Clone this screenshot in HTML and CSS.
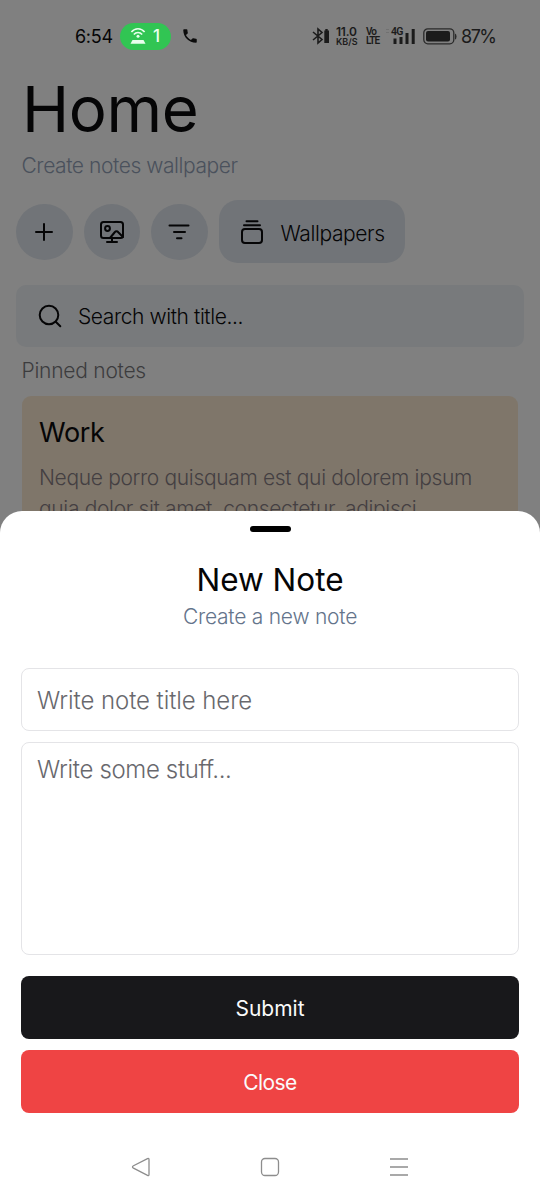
FILE: index.html
```html
<!DOCTYPE html>
<html lang="en">
<head>
<meta charset="utf-8">
<meta name="viewport" content="width=device-width">
<title>Home</title>
<link rel="stylesheet" href="styles.css">
</head>
<body>
<div class="screen">
  <header class="status">
    <span class="clock">6:54</span>
    <span class="hotspot">
      <svg width="16" height="18" viewBox="0 0 16 18" fill="none" stroke="#e9ffed" stroke-width="1.600"><path d="M1.400 5C5 .6 11 .6 14.600 5M3.800 7.600C6.200 4.800 9.800 4.800 12.200 7.600"/><circle cx="8" cy="9.200" r="1.500" fill="#e9ffed" stroke="none"/><path d="M2.500 13h11l2 3.700H.5z" fill="#e9ffed" stroke="none"/></svg>
      <span class="hotspot-count">1</span>
    </span>
    <svg class="phone" width="18" height="18" viewBox="0 0 24 24" fill="#0b0b0b"><path d="M6.600 10.800c1.400 2.800 3.800 5.100 6.600 6.600l2.200-2.200c.3-.3.700-.4 1-.2 1.100.4 2.300.6 3.600.6.600 0 1 .4 1 1V20c0 .600-.4 1-1 1C10.600 21 3 13.400 3 4c0-.600.4-1 1-1h3.500c.6 0 1 .4 1 1 0 1.200.2 2.400.6 3.600.1.300 0 .700-.2 1z"/></svg>
    <svg class="bluetooth" width="18" height="18" viewBox="0 0 18 18" fill="none" stroke="#1b1b1b" stroke-width="1.600"><path d="M1 5l9 7.500-4 3.500V2l4 3.500L1 13"/><path d="M12.300 3.500h1V2h2.400v1.500h1.300V16h-4.700z" fill="#1b1b1b" stroke="none"/></svg>
    <span class="stack speed"><b class="rate">11.0</b><b class="unit">KB/S</b></span>
    <span class="stack volte"><b>Vo</b><b>LTE</b></span>
    <span class="signal">
      <svg width="30" height="18" viewBox="0 0 30 18" fill="#1b1b1b"><path d="M7.500 11.500h3V17h-3zM13.500 10h3v7h-3zM19.500 6h3v11h-3zM25.700 2h3v15h-3z"/><path d="M0 2h3v1H0zM0 5h3v1H0z" opacity=".15"/></svg>
      <span class="network">4G</span>
    </span>
    <svg class="battery" width="34" height="17" viewBox="0 0 34 17"><rect x=".8" y=".8" width="30" height="15" rx="4" fill="none" stroke="#2a2a2a" stroke-width="1.300"/><rect x="3" y="3" width="24" height="10.600" rx="2" fill="#1b1b1b"/><path d="M32 5.500q1.500.5 1.500 3t-1.500 3z" fill="#2a2a2a"/></svg>
    <span class="percent">87%</span>
  </header>

  <main class="home">
    <h1 class="title">Home</h1>
    <p class="subtitle">Create notes wallpaper</p>
    <div class="actions">
      <button class="round" aria-label="Add"><svg width="26" height="26" viewBox="0 0 26 26"><path d="M13 5v16M5 13h16"/></svg></button>
      <button class="round" aria-label="Wallpaper"><svg width="26" height="26" viewBox="0 0 26 26"><rect x="2" y="3" width="22" height="16" rx="2.500"/><circle cx="8.500" cy="9.500" r="2.400"/><path d="M11 19l4.500-5.500q2-2.300 4 0l4.500 4.500M13 19v4M8 23h10"/></svg></button>
      <button class="round" aria-label="Filter"><svg width="26" height="26" viewBox="0 0 26 26"><path d="M3.500 6.500h19M8 13h11M11 19.200h4.500"/></svg></button>
      <button class="wide"><svg width="26" height="26" viewBox="0 0 26 26"><rect x="3" y="10" width="20" height="14" rx="3"/><path d="M5 6.200h16M7.500 2.200h11"/></svg><span>Wallpapers</span></button>
    </div>
    <div class="search">
      <svg width="26" height="26" viewBox="0 0 26 26"><circle cx="12" cy="12" r="9.300"/><path d="M18.700 18.700l4.600 4.600"/></svg>
      <span>Search with title...</span>
    </div>
    <h2 class="section">Pinned notes</h2>
    <article class="note">
      <h3 class="note-title">Work</h3>
      <p class="note-body">Neque porro quisquam est qui dolorem ipsum<br>quia dolor sit amet, consectetur, adipisci</p>
    </article>
  </main>

  <section class="sheet">
    <div class="handle"></div>
    <h2 class="sheet-title">New Note</h2>
    <p class="sheet-subtitle">Create a new note</p>
    <div class="field">Write note title here</div>
    <div class="field area">Write some stuff...</div>
    <button class="submit">Submit</button>
    <button class="close">Close</button>
    <nav class="system">
      <svg width="20" height="20" viewBox="0 0 20 20"><path d="M16.500 1.600L2.500 8.700q-2 1.200 0 2.400l14 7.300q1.500.6 1.500-1V2.600q0-1.500-1.500-1z"/></svg>
      <svg width="20" height="20" viewBox="0 0 20 20"><rect x="1.500" y="1.500" width="17" height="17" rx="3.500"/></svg>
      <svg width="20" height="20" viewBox="0 0 20 20"><path d="M1 2h18M1 10h18M1 18h18"/></svg>
    </nav>
  </section>
</div>
</body>
</html>
```
FILE: styles.css
```css
* { box-sizing: border-box; }
body { margin: 0; }
h1, h2, h3, p { margin: 0; font-weight: 300; }
button { border: 0; padding: 0; font: inherit; }
svg { display: block; flex: none; }

.screen {
  position: relative;
  width: 540px;
  height: 1200px;
  overflow: hidden;
  background: #808080;
  font-family: Inter, "Liberation Sans", sans-serif;
  font-weight: 300;
  font-size: 21px;
  color: #050506;
  white-space: nowrap;
}

.status { display: flex; align-items: center; height: 72px; padding-left: 75px; }
.clock { width: 45px; padding-top: 1px; font-size: 18px; font-weight: 400; letter-spacing: -0.3px; }
.hotspot { display: flex; align-items: center; width: 51px; height: 27px; padding-left: 10px; gap: 7px; border-radius: 14px; background: #31c553; }
.hotspot-count { font-size: 17px; font-weight: 500; color: #e9ffed; }
.phone { margin-left: 10px; }
.bluetooth { margin-left: 113px; }
.stack { display: flex; flex-direction: column; color: #1b1b1b; line-height: 10px; }
.stack b { font-weight: 600; }
.speed { width: 22px; margin-left: 6px; }
.rate { font-size: 12px; letter-spacing: -0.2px; }
.unit { font-size: 9px; line-height: 9px; letter-spacing: 0; }
.volte { width: 13px; margin-left: 8px; font-family: Roboto, sans-serif; line-height: 9px; font-size: 10px; letter-spacing: -1px; }
.signal { position: relative; margin-left: 7px; }
.network { position: absolute; left: 5px; top: 0; font-family: Roboto, sans-serif; font-size: 10.500px; line-height: 10px; font-weight: 600; letter-spacing: -0.800px; color: #1b1b1b; }
.battery { margin-left: 7px; }
.percent { margin-left: 4px; padding-top: 1px; font-size: 18px; font-weight: 400; letter-spacing: -1.500px; color: #1b1b1b; }

.home { padding: 0 16px; }
.title { height: 78px; padding-left: 6px; line-height: 74px; font-size: 63.500px; font-weight: 400; letter-spacing: -0.400px; }
.subtitle { height: 30px; padding-left: 5.500px; line-height: 31px; letter-spacing: -0.430px; color: #4a515c; }
.actions { display: flex; align-items: center; gap: 11px; height: 63px; margin-top: 20.400px; }
.actions svg, .search svg { fill: none; stroke: #050506; stroke-width: 2; stroke-linecap: round; stroke-linejoin: round; }
.round { display: grid; place-items: center; width: 56.500px; height: 56.500px; border-radius: 50%; background: #717478; }
.wide { display: flex; align-items: center; gap: 16px; width: 186px; height: 63px; padding-left: 20px; border-radius: 19px; background: #717478; color: #050506; letter-spacing: -0.400px; }
.wide span { padding-top: 3px; }
.search { display: flex; align-items: center; gap: 15px; height: 62px; margin-top: 21.600px; padding-left: 21px; border-radius: 10px; background: #787a7c; letter-spacing: -0.410px; }
.search span { padding-top: 2px; }
.section { height: 48px; padding-left: 5.500px; line-height: 47px; font-size: 21px; letter-spacing: -0.250px; color: #3c3c3e; }
.note { height: 170px; margin: 1px 6px 0; padding: 17px 17px 0; border-radius: 9px; background: #7f766a; }
.note-title { line-height: 40px; font-size: 27px; font-weight: 400; letter-spacing: -0.350px; }
.note-body { padding-top: 9px; line-height: 31px; letter-spacing: -0.340px; color: #443f42; }

.sheet { position: absolute; inset: 511px 0 0; display: flex; flex-direction: column; align-items: stretch; padding: 15px 21px 0; border-radius: 22px 22px 0 0; background: #fff; }
.handle { width: 41px; height: 6px; margin: 0 auto; border-radius: 3px; background: #000; }
.sheet-title { margin-top: 27px; line-height: 42px; font-size: 31.500px; font-weight: 400; text-align: center; }
.sheet-subtitle { margin-top: 1px; line-height: 30px; letter-spacing: -0.240px; color: #64748b; text-align: center; }
.field { height: 62.500px; margin-top: 36px; padding: 0 15px; border: 1.500px solid #e4e4e7; border-radius: 8px; line-height: 64px; font-size: 24px; letter-spacing: -0.080px; color: #68686d; }
.area { height: 213.500px; margin-top: 11px; line-height: 54px; letter-spacing: -0.350px; }
.submit, .close { height: 63px; padding-top: 2px; border-radius: 8px; color: #fafafa; font-weight: 400; }
.submit { margin-top: 21px; background: #18181b; }
.close { margin-top: 10.500px; background: #ef4444; letter-spacing: -0.600px; }
.system { display: flex; justify-content: space-between; padding: 44.500px 110px 0; }
.system svg { fill: none; stroke: #8d8d8d; stroke-width: 1.300; }
```
